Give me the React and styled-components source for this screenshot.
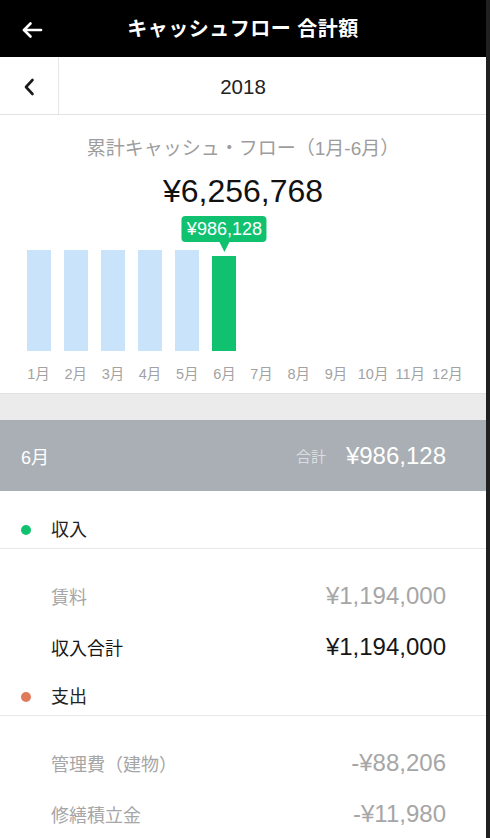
import React from 'react';
import styled, { createGlobalStyle } from 'styled-components';

const GlobalStyle = createGlobalStyle`
  html, body {
    margin: 0;
    padding: 0;
    background: #202020;
  }
  body {
    font-family: "Liberation Sans", "Noto Sans CJK JP", sans-serif;
    -webkit-font-smoothing: antialiased;
  }
`;

const Screen = styled.div`
  width: 486px;
  height: 838px;
  overflow: hidden;
  background: #ffffff;
`;

const NavBar = styled.header`
  position: relative;
  height: 57px;
  background: #000000;
  display: flex;
  align-items: center;
  justify-content: center;
`;

const NavBack = styled.button`
  position: absolute;
  left: 18px;
  top: 16px;
  width: 28px;
  height: 28px;
  padding: 0;
  border: none;
  background: transparent;
  display: flex;
  align-items: center;
  justify-content: center;
`;

const NavTitle = styled.h1`
  margin: 0;
  color: #ffffff;
  font-size: 20px;
  font-weight: 700;
  line-height: 24px;
  letter-spacing: 0.5px;
`;

const YearBar = styled.div`
  display: flex;
  height: 57px;
  border-bottom: 1px solid #e3e3e3;
`;

const YearPrev = styled.button`
  width: 59px;
  padding: 3px 0 0;
  border: none;
  border-right: 1px solid #e6e6e6;
  background: transparent;
  display: flex;
  align-items: center;
  justify-content: center;
`;

const YearLabel = styled.div`
  flex: 1;
  display: flex;
  align-items: center;
  justify-content: center;
  padding: 3px 59px 0 0;
  font-size: 20.5px;
  color: #222222;
`;

const Summary = styled.section`
  padding: 22px 20px 10px;
  display: flex;
  flex-direction: column;
  align-items: center;
`;

const SummaryTitle = styled.div`
  font-size: 19px;
  line-height: 24px;
  color: #9d9d9d;
`;

const SummaryTotal = styled.div`
  margin-top: 11px;
  font-size: 32px;
  line-height: 38px;
  color: #111111;
`;

const Chart = styled.div`
  align-self: stretch;
  margin-top: 39px;
  display: grid;
  grid-template-columns: repeat(12, 1fr);
`;

const Column = styled.div`
  display: flex;
  flex-direction: column;
  align-items: center;
`;

const BarTrack = styled.div`
  height: 102px;
  display: flex;
  align-items: flex-end;
`;

const Bar = styled.div`
  position: relative;
  width: 24px;
  background: ${p => (p.$active ? '#10c26f' : '#c9e3fb')};
`;

const Tooltip = styled.div`
  position: absolute;
  left: 50%;
  bottom: calc(100% + 14px);
  transform: translateX(-50%);
  height: 26px;
  padding: 0 5px;
  border-radius: 4px;
  background: #10c26f;
  color: #ffffff;
  font-size: 18px;
  line-height: 26px;
  white-space: nowrap;

  &::after {
    content: '';
    position: absolute;
    left: 50%;
    top: 100%;
    transform: translateX(-50%);
    border-left: 5px solid transparent;
    border-right: 5px solid transparent;
    border-top: 10px solid #10c26f;
  }
`;

const MonthLabel = styled.div`
  margin-top: 14px;
  font-size: 14.5px;
  line-height: 18px;
  color: #a2a2a2;
  white-space: nowrap;
`;

const Spacer = styled.div`
  height: 26px;
  background: #ebebeb;
  border-top: 1px solid #e2e2e2;
`;

const MonthHeader = styled.div`
  height: 71px;
  padding: 0 40px 0 21px;
  background: #a9afb4;
  display: flex;
  align-items: center;
  color: #ffffff;
`;

const MonthName = styled.div`
  flex: 1;
  font-size: 18px;
`;

const MonthSumLabel = styled.span`
  margin-right: 20px;
  font-size: 15px;
  color: #dadde0;
`;

const MonthSum = styled.span`
  font-size: 24px;
`;

const CategoryHeader = styled.div`
  height: ${p => p.$height}px;
  padding: 0 0 8px 21px;
  box-sizing: border-box;
  display: flex;
  align-items: flex-end;
  border-bottom: 1px solid #e8e8e8;
`;

const Dot = styled.span`
  width: 10px;
  height: 10px;
  margin: 0 20px 5px 0;
  border-radius: 50%;
  background: ${p => p.$color};
`;

const CategoryName = styled.span`
  font-size: 18px;
  line-height: 20px;
  color: #222222;
`;

const ItemList = styled.div`
  padding-top: 21px;
`;

const ItemRow = styled.div`
  height: 51px;
  padding: 0 40px 0 51px;
  display: flex;
  align-items: center;
  justify-content: space-between;
  color: ${p => (p.$total ? '#161616' : '#a6a6a6')};
`;

const ItemName = styled.span`
  font-size: 18px;
`;

const ItemAmount = styled.span`
  font-size: 24px;
`;

const months = [
  { label: '1月', value: 101 },
  { label: '2月', value: 101 },
  { label: '3月', value: 101 },
  { label: '4月', value: 101 },
  { label: '5月', value: 101 },
  { label: '6月', value: 95, active: true, tip: '¥986,128' },
  { label: '7月' },
  { label: '8月' },
  { label: '9月' },
  { label: '10月' },
  { label: '11月' },
  { label: '12月' },
];

const income = [
  { name: '賃料', amount: '¥1,194,000' },
  { name: '収入合計', amount: '¥1,194,000', total: true },
];

const expense = [
  { name: '管理費（建物）', amount: '-¥88,206' },
  { name: '修繕積立金', amount: '-¥11,980' },
];

const App = () => (
  <Screen>
    <GlobalStyle />
    <NavBar>
      <NavBack aria-label="戻る">
        <svg width="22" height="18" viewBox="0 0 22 18" fill="none" stroke="#fff" strokeWidth="2.6" strokeLinecap="round" strokeLinejoin="round">
          <path d="M20 9H3" />
          <path d="M9.5 2.5L3 9l6.5 6.5" />
        </svg>
      </NavBack>
      <NavTitle>キャッシュフロー 合計額</NavTitle>
    </NavBar>

    <YearBar>
      <YearPrev aria-label="前年">
        <svg width="12" height="18" viewBox="0 0 12 18" fill="none" stroke="#1a1a1a" strokeWidth="2.6" strokeLinecap="round" strokeLinejoin="round">
          <path d="M9.5 2L3 9l6.5 7" />
        </svg>
      </YearPrev>
      <YearLabel>2018</YearLabel>
    </YearBar>

    <Summary>
      <SummaryTitle>累計キャッシュ・フロー（1月-6月）</SummaryTitle>
      <SummaryTotal>¥6,256,768</SummaryTotal>
      <Chart>
        {months.map(m => (
          <Column key={m.label}>
            <BarTrack>
              {m.value ? (
                <Bar $active={m.active} style={{ height: m.value }}>
                  {m.tip && <Tooltip>{m.tip}</Tooltip>}
                </Bar>
              ) : null}
            </BarTrack>
            <MonthLabel>{m.label}</MonthLabel>
          </Column>
        ))}
      </Chart>
    </Summary>

    <Spacer />

    <MonthHeader>
      <MonthName>6月</MonthName>
      <MonthSumLabel>合計</MonthSumLabel>
      <MonthSum>¥986,128</MonthSum>
    </MonthHeader>

    <CategoryHeader $height={58}>
      <Dot $color="#10c26f" />
      <CategoryName>収入</CategoryName>
    </CategoryHeader>
    <ItemList>
      {income.map(i => (
        <ItemRow key={i.name} $total={i.total}>
          <ItemName>{i.name}</ItemName>
          <ItemAmount>{i.amount}</ItemAmount>
        </ItemRow>
      ))}
    </ItemList>

    <CategoryHeader $height={44}>
      <Dot $color="#e07a5c" />
      <CategoryName>支出</CategoryName>
    </CategoryHeader>
    <ItemList>
      {expense.map(i => (
        <ItemRow key={i.name}>
          <ItemName>{i.name}</ItemName>
          <ItemAmount>{i.amount}</ItemAmount>
        </ItemRow>
      ))}
    </ItemList>
  </Screen>
);

export default App;
